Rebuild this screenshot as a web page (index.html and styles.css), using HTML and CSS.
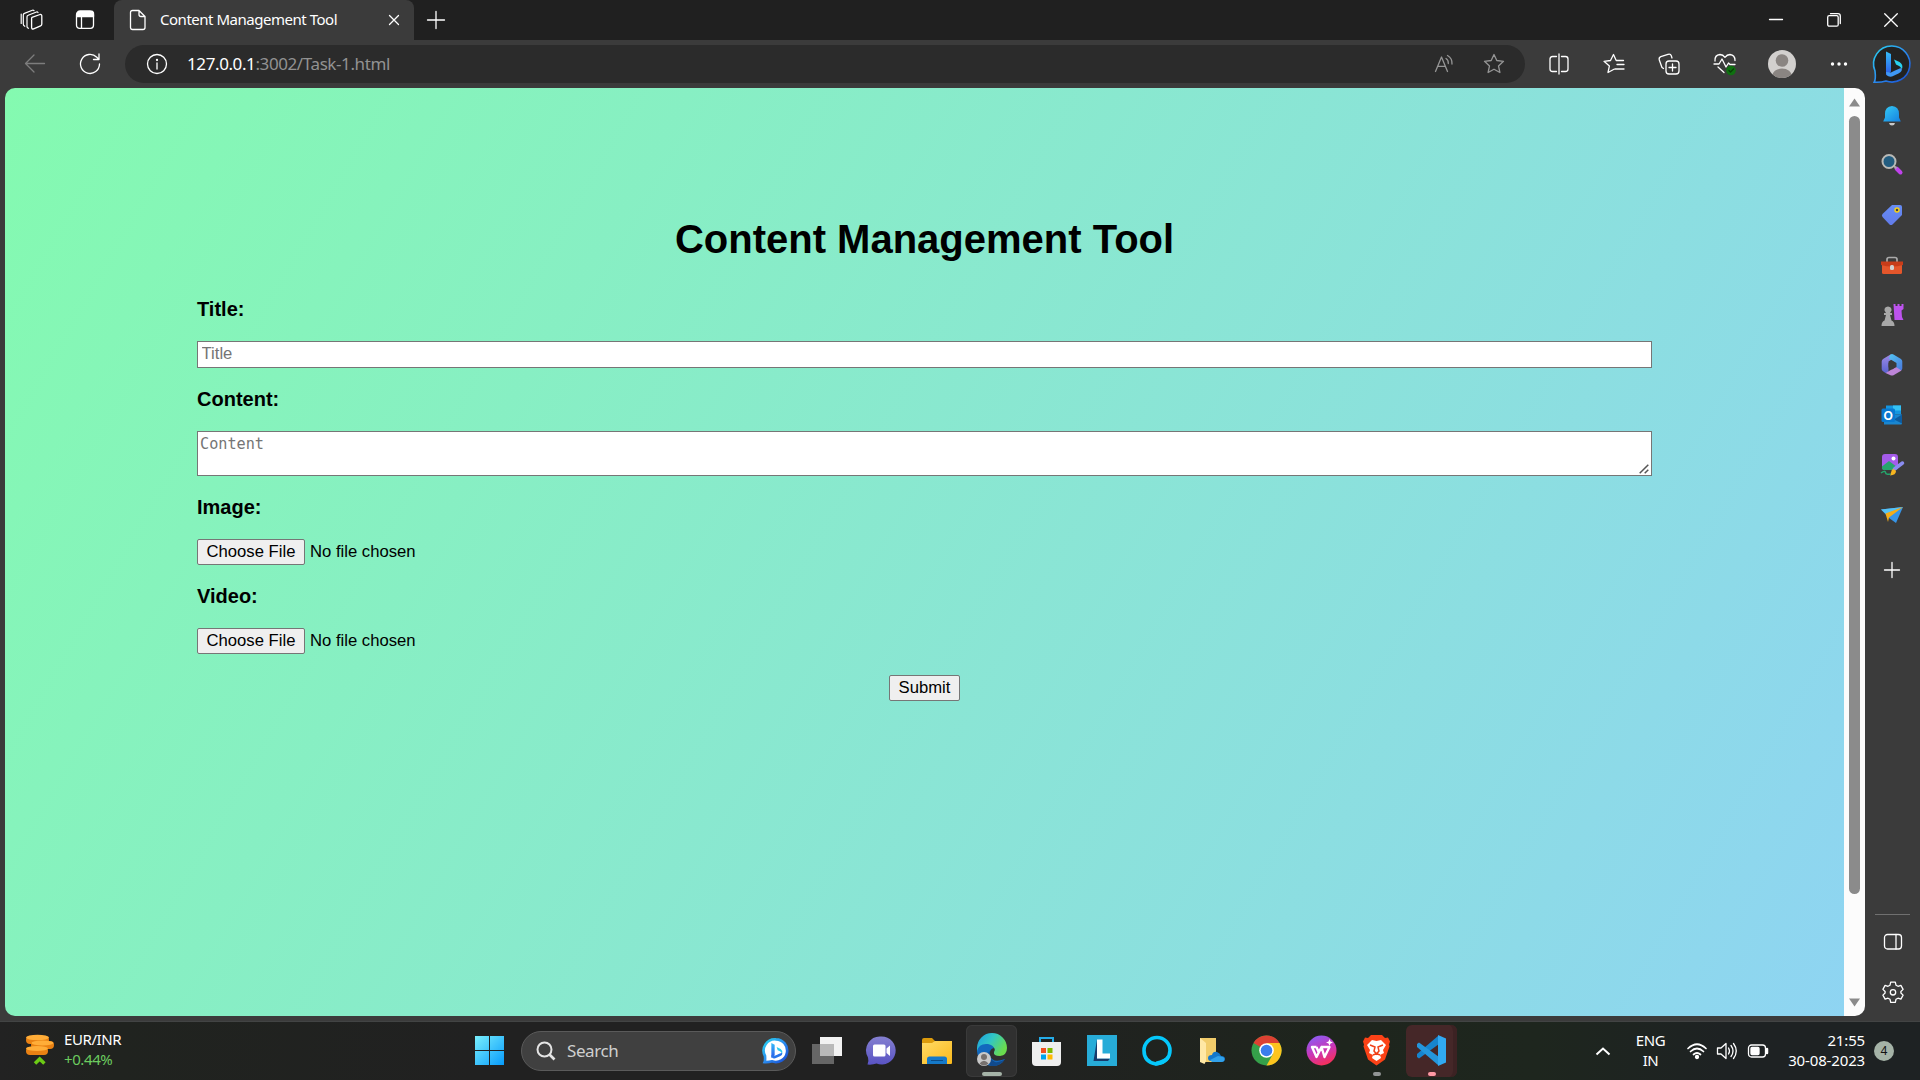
FILE: index.html
```html
<!DOCTYPE html>
<html lang="en">
<head>
<meta charset="utf-8">
<title>Content Management Tool</title>
<link rel="stylesheet" href="styles.css">
</head>
<body>
<div class="screen">
  <header class="tabbar">
    <div class="tab-tools">
      <svg class="line" width="24" height="24" viewBox="0 0 24 24"><path d="M12 9.300 20 6.500q1.800-.4 1.800 1.400v8.200q0 1.200-1.200 1.700l-7 3q-2 .7-2-1.200v-8.800q0-1.200.4-1.500z"/><path d="m8.500 20.300q-1.500-.7-1.500-1.900V8.800q0-1.200 1.200-1.600l8.300-3.200q1-.3 1.500.5M4.800 18.300Q3.300 17.500 3.300 16V7q0-1.200 1.100-1.600l8-3.200q1-.3 1.600.5M1.200 15.500V6" stroke-width="1.200"/></svg>
      <svg class="line" width="20" height="20" viewBox="0 0 20 20"><rect x="1.500" y="1.800" width="17" height="16.500" rx="3"/><path d="M2 3q1-2 3-2h10q3 0 3.500 2v3.500H2z" fill="#fff"/><path d="M6.500 6v12"/></svg>
    </div>
    <div class="tab">
      <svg class="line" width="18" height="22" viewBox="0 0 18 22"><path d="M3.500 1.500H10l6 6v11q0 2-2 2H3.500q-2 0-2-2v-15q0-2 2-2zM10 1.500v4q0 2 2 2h4"/></svg>
      <span class="tab-title">Content Management Tool</span>
      <svg class="line close" width="12" height="12" viewBox="0 0 12 12"><path d="m1.500 1.500 9 9M10.500 1.500l-9 9"/></svg>
    </div>
    <svg class="line newtab" width="18" height="18" viewBox="0 0 18 18"><path d="M9 .5v17M.5 9h17"/></svg>
    <div class="window-controls">
      <svg class="line" width="14" height="14" viewBox="0 0 14 14"><path d="M.5 6.500h13"/></svg>
      <svg class="line" width="14" height="14" viewBox="0 0 14 14"><rect x=".7" y="2.700" width="10.500" height="10.500" rx="1.500"/><path d="M3.500.7H11q2.300 0 2.300 2.300v7.500"/></svg>
      <svg class="line" width="14" height="14" viewBox="0 0 14 14"><path d="m.7.7 12.600 12.600M13.300.7.7 13.300"/></svg>
    </div>
  </header>

  <nav class="toolbar">
    <span class="cell"><svg class="line muted" width="22" height="20" viewBox="0 0 22 20"><path d="M20.500 9.500H1.500M10 1 1.500 9.500 10 18"/></svg></span>
    <span class="cell"><svg class="line" width="22" height="22" viewBox="0 0 22 22"><path d="M20.500 11A9.500 9.500 0 1 1 17.800 4.300L19.500 6M20 1v5.500h-5.500"/></svg></span>
    <div class="address">
      <svg class="line" width="22" height="22" viewBox="0 0 22 22"><circle cx="11" cy="11" r="9.500"/><path d="M11 10v6"/><circle cx="11" cy="7" r=".5"/></svg>
      <span class="url"><b>127.0.0.1</b>:3002/Task-1.html</span>
      <svg class="line dim" width="20" height="20" viewBox="0 0 20 20"><path d="m1.500 17.500 6-14.500 6 14.500M3.800 12.300h7.500M12 4.500q2.500 1.500 2.300 5M13.500 1.500q5 3 4.500 8.500"/></svg>
      <svg class="line dim" width="22" height="22" viewBox="0 0 22 22"><path d="m11 1.500 2.800 6 6.700.8-5 4.600 1.400 6.600-5.900-3.300-5.900 3.300 1.400-6.600-5-4.600 6.700-.8z"/></svg>
    </div>
    <div class="toolbar-actions">
      <span class="cell"><svg class="line" width="22" height="22" viewBox="0 0 22 22"><path d="M8.500 3.500h-4q-2.500 0-2.500 2.500v10q0 2.500 2.500 2.500h4M13.500 3.500h4q2.500 0 2.500 2.500v10q0 2.500-2.500 2.500h-4M11 1v20"/></svg></span>
      <span class="cell"><svg class="line" width="22" height="22" viewBox="0 0 22 22"><path d="M11 16.200 5 19.500l1.400-6.600-5.400-4.600 6.500-.8 3-6 2.700 6h7.300M14 11.500h7M12 16h9"/></svg></span>
      <span class="cell"><svg class="line" width="22" height="22" viewBox="0 0 22 22"><rect x="8" y="8" width="13" height="13" rx="3"/><path d="M14.500 11v7M11 14.500h7M5.500 15.500 4 14.500 1.300 7q-.7-2.500 1.500-3.300L10 1.300q2.500-.8 3.300 1.500L14 5"/></svg></span>
      <span class="cell"><svg class="line" width="24" height="24" viewBox="0 0 24 24"><path d="M2 9q-.5-6 5-6.500 3 0 5 2.800 2-2.800 5-2.800 5 .5 5 6M1 12h5l3-5 4 8 2.500-4 1.500 1.500h5M5 15l6 5.500"/><circle cx="18" cy="18.500" r="4.800" fill="#0f7010" stroke="none"/><path d="m16 18.500 1.500 1.500 3-3" stroke="#063f06"/></svg></span>
      <span class="cell"><svg width="28" height="28" viewBox="0 0 28 28"><clipPath id="av"><circle cx="14" cy="14" r="14"/></clipPath><g clip-path="url(#av)"><path fill="#d2d0ce" d="M0 0h28v28H0z"/><circle cx="14" cy="10.500" r="6.300" fill="#8a8582"/><ellipse cx="14" cy="26.500" rx="10" ry="8" fill="#8a8582"/></g></svg></span>
      <span class="cell"><svg width="18" height="6" viewBox="0 0 18 6" fill="#fff"><circle cx="2.500" cy="3" r="1.700"/><circle cx="9" cy="3" r="1.700"/><circle cx="15.500" cy="3" r="1.700"/></svg></span>
    </div>
    <svg class="bing" width="38" height="39" viewBox="0 0 38 39"><defs><linearGradient id="bg1" x2="1" y2="1"><stop stop-color="#28d4f0"/><stop offset=".5" stop-color="#2b8df0"/><stop offset="1" stop-color="#1749d0"/></linearGradient><linearGradient id="bg2" x2="0" y2="1"><stop stop-color="#36bdf8"/><stop offset="1" stop-color="#2b57e8"/></linearGradient></defs><path d="M19 1a18 18 0 1 1-6 35q-5 1.500-11.800 1.200Q3 34 2 26A18 18 0 0 1 19 1z" fill="#222" stroke="url(#bg1)" stroke-width="1.600"/><path d="m13 6.500 5 2.500v17.500l-5 4z" fill="url(#bg2)"/><path d="m21 14.500 5.500 2.500q4 2.500 2.500 7-2-3.500-6-4.500z" fill="#29d2ee"/><path d="M13 27q0 5.500 6 4.500l6.500-3q4.500-2.500 3-5.500-3 .5-10.500 4.500z" fill="#3f98f5"/></svg>
  </nav>

  <div class="workspace">
    <main class="page">
      <form class="content-form">
        <h1>Content Management Tool</h1>
        <label for="title">Title:</label>
        <input id="title" class="text-input" type="text" placeholder="Title">
        <label for="content">Content:</label>
        <div class="area-wrap">
          <textarea id="content" class="text-area" placeholder="Content"></textarea>
          <svg class="grip" width="10" height="10" viewBox="0 0 10 10"><path d="m.7 9.300 8.600-8.600M5.700 9.300l3.600-3.600" stroke="#555" stroke-width="1.500"/></svg>
        </div>
        <label for="image">Image:</label>
        <input id="image" class="file-input" type="file">
        <label for="video">Video:</label>
        <input id="video" class="file-input" type="file">
        <button class="submit" type="button">Submit</button>
      </form>
      <div class="scrollbar">
        <svg width="11" height="9" viewBox="0 0 11 9"><path d="M5.500.5 11 8.500H0z" fill="#8b8b8b"/></svg>
        <div class="thumb"></div>
        <svg width="11" height="9" viewBox="0 0 11 9"><path d="M5.500 8.500 11 .5H0z" fill="#8b8b8b"/></svg>
      </div>
    </main>

    <aside class="sidebar">
      <span class="side-item"><svg width="20" height="22" viewBox="0 0 20 22"><path d="M7 19h6q-.5 2.500-3 2.500T7 19z" fill="#c9c9c9"/><path d="M10 2q7 .5 7 8v3.500l1.800 4H1.200l1.800-4V10q0-7.500 7-8z" fill="url(#bell)"/><defs><linearGradient id="bell" x2="1" y2="1"><stop stop-color="#35ccf5"/><stop offset="1" stop-color="#147fe0"/></linearGradient></defs></svg></span>
      <span class="side-item"><svg width="22" height="22" viewBox="0 0 22 22"><path d="m15.500 14.500 4 4" stroke="#c042ec" stroke-width="4" stroke-linecap="round"/><path d="m12 11 3.500 3.500" stroke="#aaa" stroke-width="2"/><circle cx="8" cy="7.500" r="6.500" fill="#235d80" stroke="#b9b9b6" stroke-width="2"/></svg></span>
      <span class="side-item"><svg width="22" height="22" viewBox="0 0 22 22"><path d="M11 1h8q2 0 2 2v8L11.500 20.500q-1.500 1.200-3 0L1.500 13q-1.200-1.500 0-3z" fill="url(#tag)"/><circle cx="16" cy="6" r="2" fill="#444" stroke="#f6cf18" stroke-width="1.500"/><defs><linearGradient id="tag" x2="0" y2="1"><stop stop-color="#668df5"/><stop offset="1" stop-color="#627bea"/></linearGradient></defs></svg></span>
      <span class="side-item"><svg width="24" height="20" viewBox="0 0 24 20"><path d="M7 7V4.500q0-2 2-2h6q2 0 2 2V7" fill="none" stroke="#aaa" stroke-width="1.700"/><path d="M2 9h20v8.500q0 1.500-1.500 1.500h-17Q2 19 2 17.500z" fill="#e4562b"/><path d="M1 6.500h22V10q-11 3-22 0z" fill="#c83c19"/><rect x="10" y="10" width="4" height="5" rx="1.500" fill="#d1d1d1"/></svg></span>
      <span class="side-item"><svg width="24" height="24" viewBox="0 0 24 24"><path d="M13.500 1h2v2h2V1h2v2h2V1h2v5l-2 1.500.5 6.500 1.500 3h-9z" fill="#bd53ee"/><path d="M8 3.500q4 .5 3.500 4L10 10h2v2h-2l1.500 5.500q3 1 3 5.500h-13q0-4.500 3-5.500L6 12H4v-2h2L4.500 7.500q-.5-3.500 3.500-4z" fill="#a8a8a8"/></svg></span>
      <span class="side-item"><svg width="22" height="24" viewBox="0 0 22 24"><defs><linearGradient id="m1" x2="0" y2="1"><stop stop-color="#9d8be6"/><stop offset="1" stop-color="#5a62cf"/></linearGradient><linearGradient id="m2" x2="1" y2="1"><stop stop-color="#52c6f2"/><stop offset="1" stop-color="#4a76dd"/></linearGradient></defs><path d="M9.500 1.500 2 6Q.7 7 .7 8.500V16q0 1.500 1.300 2.300L4.500 20q2 .5 3-2V8.500l7-4.500z" fill="url(#m1)"/><path d="m9.500 1.500-1.500 4 7.500 4.500v7l3.500 1.300q2.300-1 2.300-2.800V8.500q0-1.500-1.300-2.500l-7.500-4.500q-1.500-.8-3 0z" fill="url(#m2)"/><path d="m4.500 20 10.500-6 5.500 3.500-8 4.700q-1.500.8-3 0z" fill="#bd85d8"/><path d="m11 8-3.500 2.200v4.100l3.500 2.200 3.800-2.300v-4z" fill="#3b3b3b"/></svg></span>
      <span class="side-item"><svg width="22" height="22" viewBox="0 0 22 22"><path d="M5 1.500h15v9H5z" fill="#1595df"/><path d="M12 1.500h8v5h-8z" fill="#34c1f3"/><path d="M3 10.500h18v9q0 1-1 1H3z" fill="#1a86cf"/><path d="m13 15.500 8-5v9z" fill="#0d5b9f"/><rect x=".5" y="4.500" width="13.500" height="13.500" rx="1.500" fill="#0878d0"/><text x="7.200" y="15.700" text-anchor="middle" class="glyph-o">O</text></svg></span>
      <span class="side-item"><svg width="24" height="24" viewBox="0 0 24 24"><rect x="2" y="1" width="16" height="16" rx="3" fill="#a45bea"/><path d="m2 13.500 7-5.500 8 6v3H4q-2 0-2-2z" fill="#25a66c"/><circle cx="13.500" cy="5.500" r="2" fill="#fff"/><path d="m14.500 16 8-6" stroke="#8a8cf0" stroke-width="3.500" stroke-linecap="round"/><path d="M12 16.500q2.500-1 4 1.500 0 4-6 4.500z" fill="#f7b520"/><path d="M1 20q4-3 4.500-.5t5 1.500" fill="none" stroke="#25a66c" stroke-width="1.500"/></svg></span>
      <span class="side-item"><svg width="24" height="20" viewBox="0 0 24 20"><path d="M1 4.500 23 2l-7 16-7-5z" fill="#3795e8"/><path d="M1 4.500 23 2 6 9z" fill="#56c2f4"/><path d="M5.500 8.500 23 2 9 12.500 8 17z" fill="#f5ad17"/></svg></span>
      <span class="side-item add"><svg class="line" width="16" height="16" viewBox="0 0 16 16"><path d="M8 .5v15M.5 8h15"/></svg></span>
      <div class="side-bottom">
        <span class="side-item"><svg class="line" width="20" height="18" viewBox="0 0 20 18"><rect x="1.500" y="1.500" width="17" height="14.500" rx="3"/><path d="M13 1.500V16"/></svg></span>
        <span class="side-item"><svg class="line" width="22" height="22" viewBox="0 0 22 22"><path d="m8.700 1.200h4.600l.7 3 2 1.100 2.900-.9 2.200 4-2.200 2.100v1.500l2.200 2.100-2.200 4-2.900-.9-2 1.100-.7 3H8.700l-.7-3-2-1.100-2.900.9-2.200-4L3.100 12v-1.500L.9 8.400l2.200-4 2.900.9 2-1.100z"/><circle cx="11" cy="11.300" r="2.700"/></svg></span>
      </div>
    </aside>
  </div>

  <footer class="taskbar">
    <div class="widget">
      <svg width="30" height="32" viewBox="0 0 30 32"><g fill="#e98113"><rect x="1" y="14" width="22" height="8" rx="4"/><rect x="6" y="8" width="23" height="8" rx="4"/><rect x="1" y="3" width="23" height="8" rx="4"/></g><g fill="#ffad38"><ellipse cx="12" cy="15.500" rx="11" ry="2.500"/><ellipse cx="17.500" cy="10" rx="11" ry="2.500"/><ellipse cx="12.500" cy="4.500" rx="11.500" ry="2.800"/></g><path d="m10 30.500 4.700-4.500 4.700 4.500" fill="none" stroke="#6ccb15" stroke-width="3.500"/></svg>
      <div class="stack"><span>EUR/INR</span><span class="up">+0.44%</span></div>
    </div>

    <div class="apps">
      <span class="app start"><svg width="29" height="29" viewBox="0 0 29 29"><defs><linearGradient id="win" gradientUnits="userSpaceOnUse" x1="0" y1="0" x2="29" y2="29"><stop stop-color="#79effd"/><stop offset="1" stop-color="#079bfb"/></linearGradient></defs><path d="M0 0h14v14H0zM15 0h14v14H15zM0 15h14v14H0zM15 15h14v14H15z" fill="url(#win)"/></svg></span>
      <div class="search">
        <svg width="20" height="20" viewBox="0 0 20 20" fill="none" stroke="#e4e4e4" stroke-width="2"><circle cx="8.500" cy="8.500" r="7"/><path d="m13.500 13.500 5 5" stroke-width="2.600"/></svg>
        <span>Search</span>
        <svg width="26" height="26" viewBox="0 0 38 39"><path d="M19 2a17 17 0 1 1-6 33q-5 1.500-11 1.200Q3 34 2.500 27A17 17 0 0 1 19 2z" fill="#fff" stroke="url(#bg1)" stroke-width="4"/><path d="m12 7.500 5 2.500v16l-5 4z" fill="url(#bg2)"/><path d="m20 13.500 6 3q3.500 2.500 2.500 7-2-4-7-5z" fill="#29cbee"/><path d="M12 26q0 5.500 6 4.500l7-3q4.500-2.500 3-5.500-3 1-11 4.500z" fill="#2875ea"/></svg>
      </div>
      <span class="app"><svg width="30" height="29" viewBox="0 0 30 29"><path d="M8 1h22v19H8z" fill="#f2f2f2"/><path d="M0 8h22v20H0z" fill="#666"/><path d="M8 8h14v12H8z" fill="#b9b9b9"/></svg></span>
      <span class="app"><svg width="29" height="29" viewBox="0 0 29 29"><defs><linearGradient id="chat" x2="0" y2="1"><stop stop-color="#8580d0"/><stop offset="1" stop-color="#5953c4"/></linearGradient></defs><path d="M14.500.5a14 14 0 1 1-5 27q-4 1.500-9 1 1.500-3.500.5-7A14 14 0 0 1 14.500.5z" fill="url(#chat)"/><rect x="6" y="8.500" width="12.500" height="12" rx="1.500" fill="#fff"/><path d="m19.500 12.500 3.500-3v10.500l-3.500-3z" fill="#fff"/></svg></span>
      <span class="app"><svg width="30" height="28" viewBox="0 0 30 28"><path d="M0 3q0-2 2-2h8l3 3h15q2 0 2 2v20H0z" fill="#dc9b0c"/><path d="M0 6h10l3-2h17v22q0 1-1 1H0z" fill="url(#fold)"/><path d="M5 22q0-2.500 2.500-2.500h15q2.500 0 2.500 2.500v5H5z" fill="#1579c9"/><path d="M9 23.500h12" stroke="#0b4c88"/><defs><linearGradient id="fold" x2="1" y2="1"><stop stop-color="#ffdb66"/><stop offset="1" stop-color="#fbb91c"/></linearGradient></defs></svg></span>
      <span class="app active"><svg width="30" height="32" viewBox="0 0 30 32"><defs><linearGradient id="edge" x2="1" y2=".5"><stop stop-color="#1b9de2"/><stop offset=".5" stop-color="#31c6c5"/><stop offset="1" stop-color="#6adb4e"/></linearGradient></defs><path d="M0 13A15 15 0 0 1 30 13q0 7-7 8-7 0-6-4 2-3-1-5Q9 8 0 17z" fill="url(#edge)"/><path d="M0 16Q2 8 11 9q5 1 6 4-5 1-4 7 2 9 15 4-4 7-12 7Q1 30 0 16z" fill="#1268be"/><path d="M13 16q-2 8 5 11 5 1 10-3-5 8-14 7Q5 23 13 16z" fill="#114a8c"/><circle cx="7" cy="24" r="7" fill="#c9c9c9"/><circle cx="7" cy="22" r="3" fill="#77716e"/><path d="M2.500 28.500q4.500-5.500 9 0-4.500 4-9 0z" fill="#77716e"/></svg><i class="mark wide"></i></span>
      <span class="app"><svg width="29" height="30" viewBox="0 0 29 30"><path d="M8 8V2h13v6" fill="none" stroke="#25ace8" stroke-width="2"/><path d="M0 6h29v20q0 4-4 4H4q-4 0-4-4z" fill="#efefef"/><path fill="#f25022" d="M9 12h5v5H9z"/><path fill="#7fba00" d="M15.500 12h5v5h-5z"/><path fill="#00a4ef" d="M9 18.500h5v5H9z"/><path fill="#ffb900" d="M15.500 18.500h5v5h-5z"/></svg></span>
      <span class="app"><svg width="30" height="31" viewBox="0 0 30 31"><path fill="#27acd8" d="M0 0h30v31H0z"/><path d="m10 4.500-3.500 21.500L10 23.500zM6.500 26H21l2-2.500H10z" fill="#173b6c"/><path d="M10 4.500h5.500v14H23V23.500H10z" fill="#fff"/></svg></span>
      <span class="app"><svg width="30" height="31" viewBox="0 0 30 31"><path d="M14 29Q2 27 2 15.500a13 13 0 0 1 26 0Q28 26 14.500 29z" fill="none" stroke="#05c8fb" stroke-width="3.600"/><path d="M13 30.500q-1-2 1-4 8-2 11-5l2.500 2Q24 30 13 30.500z" fill="#05c8fb"/></svg></span>
      <span class="app"><svg width="26" height="28" viewBox="0 0 26 28"><path d="M1 1h16v24H1z" fill="#f2cd6b"/><path d="m1 1 6 5v18l-1.500 3L1 25z" fill="#ffe8a5"/><path d="M12 24q-3 0-3-3t4-3q1-4 5-3 3 1 4 4 4 0 4 3t-4 3z" fill="#1478cc"/><path d="m11 23 8-4 5 1q2 1 1 4-1 1-3 1H13z" fill="#31a1ea"/></svg></span>
      <span class="app"><svg width="31" height="31" viewBox="0 0 31 31"><circle cx="15.500" cy="15.500" r="15" fill="#35a04a"/><path d="M15.500 15.500 2.500 8A15 15 0 0 1 28.500 8z" fill="#dc4132"/><path d="M15.500 8h13a15 15 0 0 1-13 22.500L22 19z" fill="#fcc41e"/><circle cx="15.500" cy="15.500" r="7.300" fill="#fff"/><circle cx="15.500" cy="15.500" r="5.800" fill="#3b7ded"/></svg></span>
      <span class="app"><svg width="31" height="31" viewBox="0 0 31 31"><defs><linearGradient id="wps" x1=".3" x2=".7" y2="1"><stop stop-color="#8c5cf2"/><stop offset=".5" stop-color="#ca36b8"/><stop offset="1" stop-color="#fa2f50"/></linearGradient></defs><circle cx="15.500" cy="15.500" r="15" fill="url(#wps)"/><path d="M10.500 12H6l4.500 10 5-10 3 10 5-10h-8M10.500 12l2 5" fill="none" stroke="#fff" stroke-width="2.400" stroke-linejoin="round"/><path d="m23.500 4 1 2.500L27 7.500l-2.500 1-1 2.500-1-2.500-2.500-1 2.500-1z" fill="#fff"/></svg></span>
      <span class="app"><svg width="27" height="31" viewBox="0 0 27 31"><path d="m8 0h11l3 3 3-.5 2 4-1 3 .5 2-4.500 13-8.500 6-8.500-6L.5 11.500 1 9.500 0 6.500l2-4L5 3z" fill="#fb4217"/><path d="m9 5 4.500 1L18 5l5 5-3 5 1 3-4 2 1 3-4.500 3L9 23l1-3-4-2 1-3-3-5z" fill="#fff"/><path d="m7 10 5 2-1 4 2.500 3 2.500-3-1-4 5-2M10 20l3.500-1.500L17 20" fill="none" stroke="#f04018" stroke-width="1.500"/></svg><i class="mark"></i></span>
      <span class="app alert"><svg width="31" height="31" viewBox="0 0 31 31"><path d="M22 1 1 19v3l2 1.500L23 9z" fill="#1684ce"/><path d="m3 7.500-2 1.500v3l21 18 1-8z" fill="#2496dc"/><path d="m22 0 8 3.500v24L22 31z" fill="#31a9f2"/></svg><i class="mark pink"></i></span>
    </div>

    <div class="tray">
      <svg class="chev" width="16" height="10" viewBox="0 0 16 10"><path d="m1.500 8.500 6.500-6 6.500 6" fill="none" stroke="#fff" stroke-width="2"/></svg>
      <div class="stack lang"><span>ENG</span><span>IN</span></div>
      <svg class="line" width="20" height="18" viewBox="0 0 20 18"><path d="M1 6.500q9-8.500 18 0M3.500 9.500q6.500-6 13 0M6.500 12.500q3.500-3 7 0" stroke-width="1.700"/><circle cx="10" cy="15" r="1.500" fill="#fff"/></svg>
      <svg class="line" width="22" height="18" viewBox="0 0 22 18"><path d="M1.500 6H5l5-4.500v15L5 12H1.500zM12.500 6q2 3 0 6M15 3.500q4 5.500 0 11M17.500 1.500q5.500 7.500 0 15"/></svg>
      <svg class="line" width="22" height="16" viewBox="0 0 22 16"><rect x="1.500" y="2" width="17" height="12" rx="3"/><rect x="4" y="4.500" width="8" height="7" rx="1" fill="#fff"/><path d="M20 6v4" stroke-width="2.500"/></svg>
      <div class="stack clock"><span>21:55</span><span>30-08-2023</span></div>
      <span class="badge">4</span>
    </div>
  </footer>
</div>
</body>
</html>
```
FILE: styles.css
```css
* { box-sizing: border-box; }

body {
  margin: 0;
  background: #3b3b3b;
  color: #fff;
  font-family: "Noto Sans", "Open Sans", sans-serif;
  overflow: hidden;
}

svg { display: block; flex: none; overflow: visible; }

.line {
  fill: none;
  stroke: #fff;
  stroke-width: 1.3;
  stroke-linecap: round;
  stroke-linejoin: round;
}
.line.muted { stroke: #7d7d7d; }
.line.dim { stroke: #969696; }

.screen {
  width: 1920px;
  height: 1080px;
  display: grid;
  grid-template-rows: 40px 48px 933px 59px;
}

/* Tab strip */
.tabbar {
  display: flex;
  align-items: center;
  background: #202020;
}
.tab-tools {
  width: 114px;
  display: flex;
  align-items: center;
  gap: 31px;
  padding-left: 20px;
}
.tab {
  width: 300px;
  height: 40px;
  display: flex;
  align-items: center;
  padding: 0 14px 0 15px;
  background: #3b3b3b;
  border-radius: 8px 8px 0 0;
}
.tab-title {
  margin-left: 13px;
  padding-bottom: 2px;
  font-size: 15px;
  line-height: 20px;
  letter-spacing: -0.48px;
  white-space: nowrap;
}
.close { margin-left: auto; }
.newtab { margin-left: 12.500px; }
.window-controls {
  display: flex;
  gap: 43.500px;
  margin-left: auto;
  padding-right: 22px;
}

/* Toolbar */
.toolbar {
  display: flex;
  align-items: center;
  padding-left: 7.500px;
}
.cell {
  width: 55px;
  display: flex;
  justify-content: center;
}
.address {
  width: 1400px;
  height: 38px;
  margin-left: 7.500px;
  padding: 0 20px 0 21px;
  display: flex;
  align-items: center;
  border-radius: 19px;
  background: #2b2b2b;
}
.url {
  flex: 1;
  margin-left: 19px;
  padding-bottom: 2px;
  font-size: 17px;
  letter-spacing: -0.4px;
  color: #929292;
}
.url b { color: #fff; font-weight: 400; }
.address .dim:last-child { margin-left: 29px; }
.toolbar-actions {
  display: flex;
  align-items: center;
  margin-left: 6.500px;
}
.toolbar-actions .cell { width: 57px; }
.toolbar-actions .cell:nth-child(-n+3) { width: 55px; }
.bing { margin-left: 5.500px; }

/* Web page and sidebar */
.workspace { display: flex; padding-left: 5px; }
.page {
  width: 1860px;
  height: 928px;
  display: flex;
  overflow: hidden;
  border-radius: 10px;
  background: linear-gradient(120deg, #84fab0, #8fd3f4) 0 0 / 1839px 1049px no-repeat;
}
.content-form {
  width: 1839px;
  padding: 128px 192px 0;
  display: flex;
  flex-direction: column;
  color: #000;
  font-family: "Liberation Sans", Arial, sans-serif;
}
.content-form h1 {
  margin: 0 0 36px;
  text-align: center;
  font-size: 40px;
  line-height: 46px;
}
.content-form label {
  height: 23px;
  font-size: 20px;
  font-weight: 700;
  line-height: 23px;
}
.text-input, .area-wrap, .file-input, .submit {
  margin: 20px 0;
  font: 16.670px "Liberation Sans", Arial, sans-serif;
}
.text-input, .text-area {
  width: 1455px;
  border: 1px solid #767676;
  border-radius: 0;
  background: #fff;
}
.text-input { height: 27px; padding: 0 3.500px 2px; }
.area-wrap { position: relative; height: 45px; }
.text-area {
  display: block;
  height: 45px;
  margin: 0;
  padding: 3px 2px 2px;
  resize: none;
  font: 15.200px/19px "DejaVu Sans Mono", monospace;
}
.grip {
  position: absolute;
  right: 3px;
  bottom: 2px;
}
::placeholder { color: #757575; }
.file-input { height: 26px; }
.file-input::file-selector-button, .submit {
  height: 26px;
  border: 1px solid #767676;
  border-radius: 2px;
  background: #efefef;
  color: #000;
  font: 16.670px "Liberation Sans", Arial, sans-serif;
}
.file-input::file-selector-button {
  width: 108px;
  margin-right: 5px;
  padding: 0;
}
.submit {
  width: 71px;
  margin: 1px 0 0;
  padding: 0;
  align-self: center;
}
.scrollbar {
  width: 21px;
  padding: 10px 0 9px;
  display: flex;
  flex-direction: column;
  align-items: center;
  background: #fcfcfc;
}
.thumb {
  width: 11px;
  height: 778px;
  margin: 9px 0 auto;
  border-radius: 6px;
  background: #8b8b8b;
}
.sidebar {
  width: 54px;
  padding-top: 2px;
  display: flex;
  flex-direction: column;
}
.side-item {
  height: 50px;
  display: flex;
  align-items: center;
  justify-content: center;
}
.side-item.add { margin-top: 5px; }
.side-bottom {
  width: 35px;
  height: 107px;
  margin: auto 0 0 10px;
  padding-top: 2px;
  border-top: 1px solid #707070;
}
.glyph-o {
  fill: #fff;
  font: 700 12px "Liberation Sans", sans-serif;
}

/* Taskbar */
.taskbar {
  display: grid;
  grid-template-columns: 462px 1fr 345px;
  padding-bottom: 1px;
  border-top: 1px solid #424444;
  background: linear-gradient(90deg, #222 0, #20231f 6%, #212121 25%, #212121 50%, #1e251d 70%, #1e261e 80%, #1e2223 90%, #1e2223);
}
.widget {
  display: flex;
  align-items: center;
  gap: 9px;
  padding: 0 0 3px 25px;
}
.stack {
  display: flex;
  flex-direction: column;
  padding-bottom: 1px;
  font-size: 15px;
  line-height: 20px;
  letter-spacing: -0.4px;
}
.up { color: #6ccb5f; }
.apps { display: flex; align-items: center; }
.app {
  position: relative;
  width: 51px;
  height: 52px;
  margin: 0 2px;
  display: flex;
  align-items: center;
  justify-content: center;
  border-radius: 6px;
}
.start { width: 55px; margin: 0; }
.active { background: #303030; box-shadow: inset 0 0 0 1px #3a3a3a; }
.alert { background: #452728; box-shadow: inset -5px 0 0 -1px #3c2223; }
.mark {
  position: absolute;
  left: 50%;
  bottom: 1px;
  width: 8px;
  height: 4px;
  transform: translateX(-50%);
  border-radius: 2px;
  background: #929595;
}
.mark.wide { width: 20px; background: #a5b3a7; }
.mark.pink { background: #ff99a4; }
.search {
  width: 275px;
  height: 40px;
  margin: 0 3px 0 4px;
  padding: 0 6px 0 14px;
  display: flex;
  align-items: center;
  border: 1px solid #5a5a5a;
  border-radius: 20px;
  background: #404040;
  color: #cfcfcf;
  font-size: 17px;
  letter-spacing: -0.4px;
}
.search span { flex: 1; margin-left: 11px; padding-bottom: 1px; }
.tray {
  display: flex;
  align-items: center;
  padding-left: 20px;
}
.lang { width: 31px; margin: 0 21px 0 24px; align-items: center; }
.tray .line + .line { margin-left: 9px; }
.clock { width: 80px; margin-left: 16px; align-items: flex-end; white-space: nowrap; letter-spacing: -0.15px; }
.badge {
  width: 20px;
  height: 20px;
  margin-left: 9px;
  border-radius: 50%;
  background: #a5b3a7;
  color: #111;
  font-size: 12px;
  line-height: 20px;
  text-align: center;
}
```
